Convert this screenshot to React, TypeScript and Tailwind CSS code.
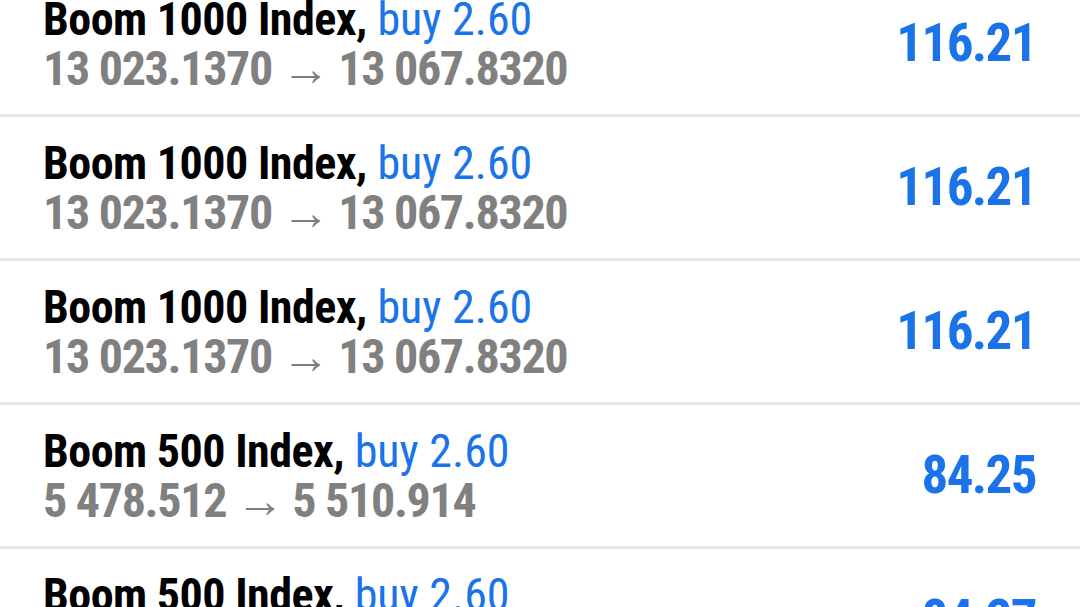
import React from "react";

const rows = [
  { sym: "Boom 1000 Index,", vol: "buy 2.60", from: "13 023.1370", to: "13 067.8320", val: "116.21" },
  { sym: "Boom 1000 Index,", vol: "buy 2.60", from: "13 023.1370", to: "13 067.8320", val: "116.21" },
  { sym: "Boom 1000 Index,", vol: "buy 2.60", from: "13 023.1370", to: "13 067.8320", val: "116.21" },
  { sym: "Boom 500 Index,", vol: "buy 2.60", from: "5 478.512", to: "5 510.914", val: "84.25" },
  { sym: "Boom 500 Index,", vol: "buy 2.60", from: "5 478.512", to: "5 510.914", val: "84.27" },
];

export default function App() {
  return (
    <div
      className="w-[1080px] h-[607px] overflow-hidden bg-white font-stretch-[75%]"
      style={{ fontFamily: "Roboto, 'Noto Sans', sans-serif" }}
    >
      <div className="-mt-[27px]">
        {rows.map((r, i) => (
          <div
            key={i}
            className="flex items-center justify-between h-[144px] pl-[43px] pr-[44px] border-b-[3px] border-[#e6e6e6]"
          >
            <div className="flex flex-col">
              <div className="text-[46px] leading-[50px] font-bold text-black whitespace-nowrap">
                <span className="tracking-[-0.5px]">{r.sym}</span>{" "}
                <span className="font-normal text-[#1a73e8]">{r.vol}</span>
              </div>
              <div className="text-[48px] leading-[50px] font-bold text-[#808080] whitespace-nowrap tracking-[-1.3px]">
                {r.from} <span className="font-normal">→</span> {r.to}
              </div>
            </div>
            <div className="text-[53px] font-bold text-[#1a73e8] tracking-[-1.6px]">{r.val}</div>
          </div>
        ))}
      </div>
    </div>
  );
}
